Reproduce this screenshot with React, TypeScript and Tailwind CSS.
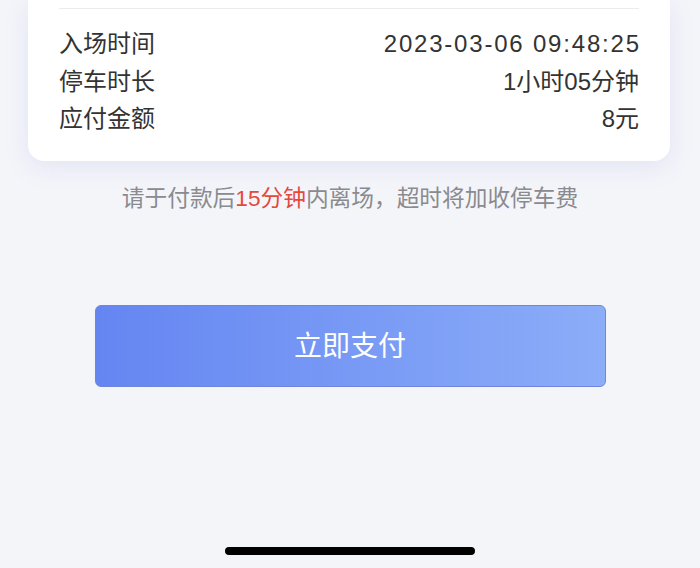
export default function App() {
  const font = { fontFamily: '"Liberation Sans", "Noto Sans CJK SC", "Noto Sans", sans-serif' };
  return (
    <div className="w-[700px] h-[568px] overflow-hidden bg-[#f4f5f9] flex flex-col" style={font}>
      <div className="ml-[28px] mr-[30px] bg-white rounded-b-[16px] shadow-[0_6px_24px_rgba(120,130,220,0.14)] px-[31px] pt-[8px] pb-[23px]">
        <div className="h-px bg-[#ececf0]" />
        <div className="pt-[16px] flex flex-col text-[24px] leading-[37.5px] text-[#333333]">
          <div className="flex justify-between"><span>入场时间</span><span className="tracking-[1.8px] -mr-[1.8px]">2023-03-06 09:48:25</span></div>
          <div className="flex justify-between"><span>停车时长</span><span>1小时05分钟</span></div>
          <div className="flex justify-between"><span>应付金额</span><span>8元</span></div>
        </div>
      </div>
      <div className="mt-[22px] text-center text-[22.7px] leading-[30px] text-[#8a8b90]">
        请于付款后<span className="text-[#e5483d]">15分钟</span>内离场，超时将加收停车费
      </div>
      <div className="mt-[92px] mx-auto w-[511px] h-[82px] rounded-[6px] border border-[#6f86dc] bg-gradient-to-r from-[#6585f1] to-[#8cadf8] flex items-center justify-center pt-[3px] text-white text-[28px]">
        立即支付
      </div>
      <div className="mt-auto mb-[13px] mx-auto w-[250px] h-[8px] rounded-full bg-black" />
    </div>
  );
}
